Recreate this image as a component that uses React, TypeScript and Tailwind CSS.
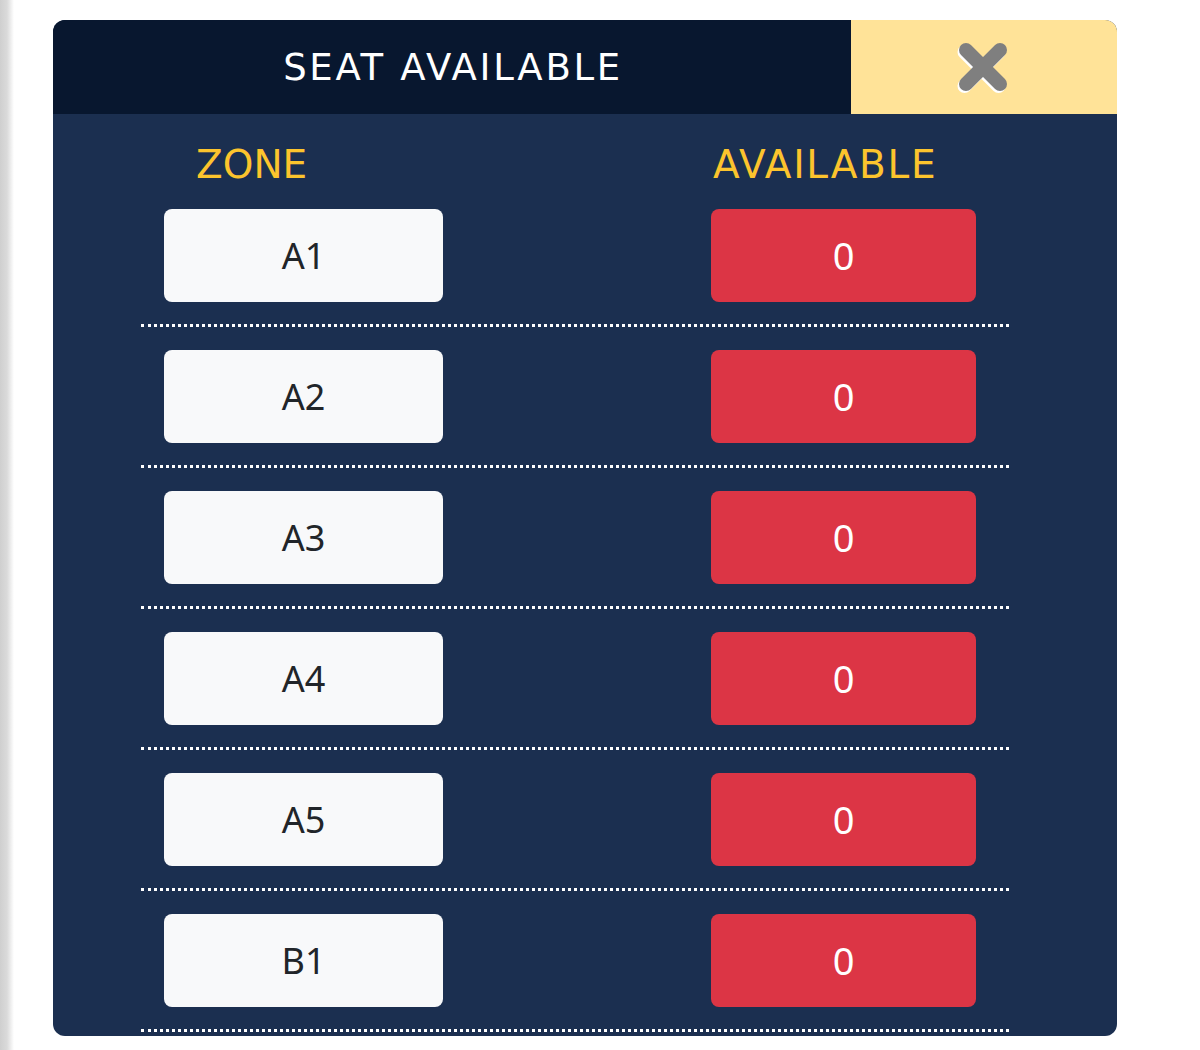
const zones = ["A1", "A2", "A3", "A4", "A5", "B1"];

function CloseIcon() {
  return (
    <svg width="52" height="52" viewBox="0 0 52 52">
      <g stroke="#ffffff" strokeWidth="14" strokeLinecap="round" transform="translate(-1.5 2)">
        <line x1="9" y1="9" x2="43" y2="43" />
        <line x1="43" y1="9" x2="9" y2="43" />
      </g>
      <g stroke="#7f7f7f" strokeWidth="14" strokeLinecap="round">
        <line x1="9" y1="9" x2="43" y2="43" />
        <line x1="43" y1="9" x2="9" y2="43" />
      </g>
    </svg>
  );
}

const headFont = { fontFamily: '"DejaVu Sans", "Noto Sans", sans-serif' };

export default function App() {
  return (
    <div
      className="relative h-[1050px] w-[1200px] overflow-hidden bg-white"
      style={{ fontFamily: '"Noto Sans", Arial, sans-serif' }}
    >
      <div className="absolute left-0 top-0 h-full w-[14px] bg-gradient-to-r from-[#cfcfcf] via-[#dadada] to-white" />

      <div className="ml-[53px] mt-[20px] w-[1064px] overflow-hidden rounded-[12px] bg-[#1b2f50]">
        {/* header */}
        <div className="flex h-[94px]">
          <div
            className="flex w-[798px] items-center justify-center bg-[#08172f] pl-[2px] pt-[2px] text-[37px] tracking-[2.7px] text-white"
            style={headFont}
          >
            SEAT AVAILABLE
          </div>
          <div className="flex flex-1 items-center justify-center bg-[#ffe398] pr-[2px]">
            <CloseIcon />
          </div>
        </div>

        {/* body */}
        <div className="h-[922px] pl-[88px]">
          <div className="flex h-[95px] items-center text-[39px] text-[#fcc42d]" style={headFont}>
            <div className="w-[570px] pl-[55px] pt-[7px]">ZONE</div>
            <div className="pl-[2px] pt-[7px] tracking-[1.7px]">AVAILABLE</div>
          </div>
          <div className="w-[868px]">
            {zones.map((z) => (
              <div key={z} className="border-b-[3px] border-dotted border-white pb-[22px] pt-[23px] first:pt-0">
                <div className="flex">
                  <div className="ml-[23px] flex h-[93px] w-[279px] items-center justify-center rounded-[8px] bg-[#f8f9fa] text-[36px] text-[#212529]">
                    {z}
                  </div>
                  <div className="ml-[268px] flex h-[93px] w-[265px] items-center justify-center rounded-[8px] bg-[#dc3545] text-[38px] text-white">
                    0
                  </div>
                </div>
              </div>
            ))}
          </div>
        </div>
      </div>
    </div>
  );
}
